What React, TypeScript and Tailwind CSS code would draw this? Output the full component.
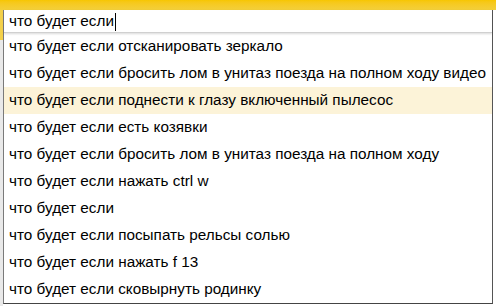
import React from "react";

const items = [
  "что будет если отсканировать зеркало",
  "что будет если бросить лом в унитаз поезда на полном ходу видео",
  "что будет если поднести к глазу включенный пылесос",
  "что будет если есть козявки",
  "что будет если бросить лом в унитаз поезда на полном ходу",
  "что будет если нажать ctrl w",
  "что будет если",
  "что будет если посыпать рельсы солью",
  "что будет если нажать f 13",
  "что будет если сковырнуть родинку",
];

export default function App() {
  return (
    <div
      className="w-[496px] h-[306px] bg-white flex flex-col overflow-hidden"
      style={{ fontFamily: '"Liberation Sans", Arial, sans-serif' }}
    >
      <div className="h-[10px] bg-gradient-to-b from-[#f7c600] to-[#f3cf3a] shrink-0" />
      <div className="flex flex-1 min-h-0 items-start">
        <div className="w-[3px] self-stretch flex flex-col shrink-0">
          <div className="h-[30px] bg-[#f3d04a]" />
          <div className="flex-1 bg-[#e9e9e9]" />
        </div>
        <div className="flex-1 flex flex-col border-l border-[#7a7a7a] border-r border-b border-r-[#555] border-b-[#444]">
          <div className="h-[23px] shrink-0 flex items-center pl-[5px] pt-[1px] text-[15.3px] text-black border-b border-[#d0d0d0] shadow-[0_1px_2px_rgba(0,0,0,0.15)]">
            <span>что будет если</span>
            <span className="w-px h-[18px] bg-black ml-px" />
          </div>
          <div className="flex flex-col">
            {items.map((t, i) => (
              <div
                key={i}
                className={
                  "h-[27px] shrink-0 flex items-center pl-[5px] text-[15.3px] text-black whitespace-nowrap " +
                  (i === 2 ? "bg-[#fcf3d8]" : "")
                }
              >
                {t}
              </div>
            ))}
          </div>
        </div>
        <div className="w-[3px] shrink-0 self-stretch bg-white" />
      </div>
    </div>
  );
}
